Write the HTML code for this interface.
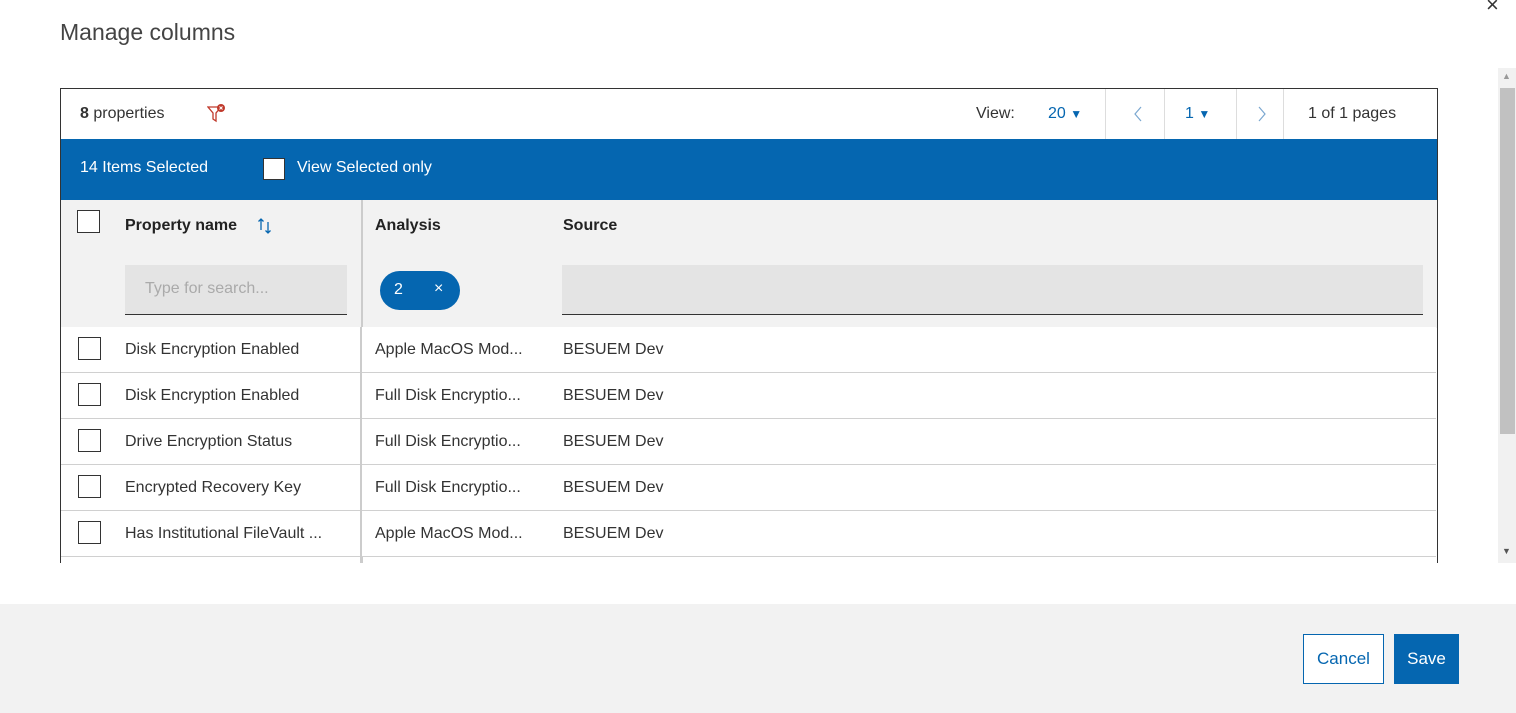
<!DOCTYPE html>
<html><head><style>
*{box-sizing:border-box;margin:0;padding:0}
body{width:1516px;height:713px;overflow:hidden;background:#fff;font-family:"Liberation Sans",Arial,sans-serif;color:#222;position:relative}
.abs{position:absolute}
.cb{position:absolute;width:23px;height:23px;border:1px solid #333;background:#fff}
.row{position:absolute;left:61px;width:1375px;height:46px;border-bottom:1px solid #d0d0d0;background:#fff}
.row span{position:absolute;top:14px;font-size:16px;color:#333}
</style></head><body>
<div class="abs" style="left:60px;top:19px;font-size:23px;color:#444">Manage columns</div>
<div class="abs" style="left:1486px;top:-8px;font-size:22px;color:#333">×</div>
<div class="abs" style="left:1498px;top:68px;width:18px;height:495px;background:#f1f1f1"></div>
<div class="abs" style="left:1500px;top:88px;width:15px;height:346px;background:#c1c1c1"></div>
<div class="abs" style="left:1502px;top:71px;font-size:9px;color:#999">▲</div>
<div class="abs" style="left:1502px;top:546px;font-size:9px;color:#555">▼</div>

<div class="abs" style="left:60px;top:88px;width:1378px;height:475px;border:1px solid #333;border-bottom:none;overflow:hidden">
  <div class="abs" style="left:19px;top:16px;font-size:16px;color:#333"><b>8</b> properties</div>
  <svg class="abs" style="left:146px;top:15px" width="20" height="20" viewBox="0 0 20 20"><path d="M1 3h13l-5 6v8l-3-2v-6z" fill="none" stroke="#c0392b" stroke-width="1.3"/><circle cx="14" cy="4" r="4" fill="#c0392b"/><path d="M12.5 2.5l3 3M15.5 2.5l-3 3" stroke="#fff" stroke-width="1"/></svg>
  <div class="abs" style="left:915px;top:16px;font-size:16px;color:#333">View:</div>
  <div class="abs" style="left:987px;top:16px;font-size:16px;color:#0566b0">20 <span style="font-size:12px">▼</span></div>
  <div class="abs" style="left:1044px;top:0;width:1px;height:50px;background:#ddd"></div>
  <svg class="abs" style="left:1072px;top:17px" width="10" height="16"><path d="M8 1L2 8l6 7" fill="none" stroke="#7aa7d0" stroke-width="1.2"/></svg>
  <div class="abs" style="left:1103px;top:0;width:1px;height:50px;background:#ddd"></div>
  <div class="abs" style="left:1124px;top:16px;font-size:16px;color:#0566b0">1 <span style="font-size:12px">▼</span></div>
  <div class="abs" style="left:1175px;top:0;width:1px;height:50px;background:#ddd"></div>
  <svg class="abs" style="left:1196px;top:17px" width="10" height="16"><path d="M2 1l6 7-6 7" fill="none" stroke="#7aa7d0" stroke-width="1.2"/></svg>
  <div class="abs" style="left:1222px;top:0;width:1px;height:50px;background:#ddd"></div>
  <div class="abs" style="left:1247px;top:16px;font-size:16px;color:#333">1 of 1 pages</div>

  <div class="abs" style="left:0;top:50px;width:1378px;height:61px;background:#0566b0"></div>
  <div class="abs" style="left:19px;top:70px;font-size:16px;color:#fff">14 Items Selected</div>
  <div class="abs" style="left:202px;top:69px;width:22px;height:22px;background:#fff;border:1px solid #333"></div>
  <div class="abs" style="left:236px;top:70px;font-size:16px;color:#fff">View Selected only</div>

  <div class="abs" style="left:0;top:111px;width:1378px;height:128px;background:#f2f2f2"></div>
  <div class="abs" style="left:300px;top:111px;width:2px;height:380px;background:#ccc"></div>
  <div class="cb" style="left:16px;top:121px"></div>
  <div class="abs" style="left:64px;top:128px;font-size:16px;font-weight:bold">Property name</div>
  <svg class="abs" style="left:196px;top:128px" width="16" height="18"><path d="M4 13V2M1.5 4.5L4 2l2.5 2.5M11 5v11M8.5 13.5L11 16l2.5-2.5" fill="none" stroke="#0566b0" stroke-width="1.3"/></svg>
  <div class="abs" style="left:314px;top:128px;font-size:16px;font-weight:bold">Analysis</div>
  <div class="abs" style="left:502px;top:128px;font-size:16px;font-weight:bold">Source</div>
  <div class="abs" style="left:64px;top:176px;width:222px;height:50px;background:#e4e4e4;border-bottom:1px solid #333"></div>
  <div class="abs" style="left:84px;top:191px;font-size:16px;color:#aaa">Type for search...</div>
  <div class="abs" style="left:319px;top:182px;width:80px;height:39px;border-radius:20px;background:#0566b0;color:#fff"><span class="abs" style="left:14px;top:10px;font-size:16px">2</span><span class="abs" style="left:54px;top:9px;font-size:16px">×</span></div>
  <div class="abs" style="left:501px;top:176px;width:861px;height:50px;background:#e4e4e4;border-bottom:1px solid #333"></div>
</div>
<div class="abs" style="left:61px;top:327px;width:1375px;height:236px;overflow:hidden">
 <div style="position:relative">
  <div class="row" style="left:0;top:0"><div class="cb" style="left:17px;top:10px"></div><span style="left:64px">Disk Encryption Enabled</span><span style="left:314px">Apple MacOS Mod...</span><span style="left:502px">BESUEM Dev</span></div>
  <div class="row" style="left:0;top:46px"><div class="cb" style="left:17px;top:10px"></div><span style="left:64px">Disk Encryption Enabled</span><span style="left:314px">Full Disk Encryptio...</span><span style="left:502px">BESUEM Dev</span></div>
  <div class="row" style="left:0;top:92px"><div class="cb" style="left:17px;top:10px"></div><span style="left:64px">Drive Encryption Status</span><span style="left:314px">Full Disk Encryptio...</span><span style="left:502px">BESUEM Dev</span></div>
  <div class="row" style="left:0;top:138px"><div class="cb" style="left:17px;top:10px"></div><span style="left:64px">Encrypted Recovery Key</span><span style="left:314px">Full Disk Encryptio...</span><span style="left:502px">BESUEM Dev</span></div>
  <div class="row" style="left:0;top:184px"><div class="cb" style="left:17px;top:10px"></div><span style="left:64px">Has Institutional FileVault ...</span><span style="left:314px">Apple MacOS Mod...</span><span style="left:502px">BESUEM Dev</span></div>
  <div class="abs" style="left:299px;top:0;width:2px;height:236px;background:#ccc"></div>
 </div>
</div>

<div class="abs" style="left:0;top:604px;width:1516px;height:109px;background:#f2f2f2"></div>
<div class="abs" style="left:1303px;top:634px;width:81px;height:50px;border:1px solid #0566b0;background:#fff;color:#0566b0;font-size:17px;text-align:center;line-height:48px">Cancel</div>
<div class="abs" style="left:1394px;top:634px;width:65px;height:50px;background:#0566b0;color:#fff;font-size:17px;text-align:center;line-height:50px">Save</div>
</body></html>
